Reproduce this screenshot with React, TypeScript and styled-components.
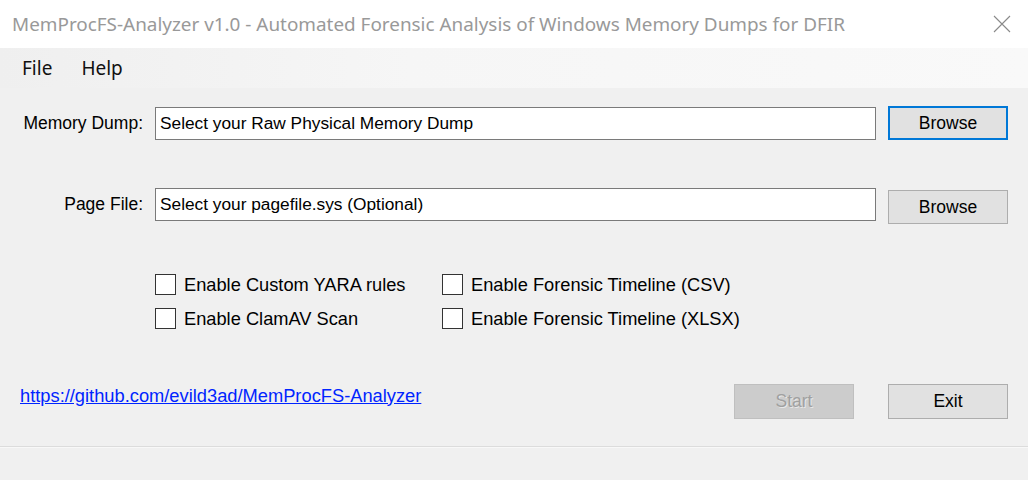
import * as React from 'react';
import styled, { createGlobalStyle } from 'styled-components';

const GlobalStyle = createGlobalStyle`
	html, body {
		margin: 0;
		padding: 0;
		background: #ffffff;
	}
	body {
		font-family: "Liberation Sans", Arial, sans-serif;
	}
`;

const Window = styled.div`
	width: 1028px;
	height: 485px;
	display: flex;
	flex-direction: column;
	background-color: #f0f0f0;
	overflow: hidden;
`;

const TitleBar = styled.div`
	height: 48px;
	flex-shrink: 0;
	background-color: #ffffff;
	display: flex;
	align-items: center;
	justify-content: space-between;
	padding: 0 17px 0 12px;
`;

const TitleText = styled.span`
	font-family: "Noto Sans", "Open Sans", sans-serif;
	font-size: 18.9px;
	color: #999999;
	white-space: nowrap;
`;

const CloseIcon = styled.svg`
	width: 18px;
	height: 18px;
	margin-bottom: 1px;
`;

const MenuBar = styled.div`
	height: 40px;
	flex-shrink: 0;
	display: flex;
	align-items: center;
	padding-left: 13px;
	background: linear-gradient(to right, #efefef 0%, #f6f6f6 40%, #f9f9f9 100%);
`;

const MenuItem = styled.span`
	font-family: "Noto Sans", "Open Sans", sans-serif;
	font-size: 19px;
	color: #111111;
	padding: 0 9px;
	margin-right: 11px;
`;

const Content = styled.div`
	flex: 1;
	display: flex;
	flex-direction: column;
	padding: 18px 20px 0 20px;
	font-size: 17.5px;
	color: #000000;
`;

const FileGrid = styled.div`
	display: grid;
	grid-template-columns: 123px 721px 120px;
	column-gap: 12px;
	row-gap: 48px;
	align-items: start;
`;

const FieldLabel = styled.label<{ $shift?: number }>`
	text-align: right;
	white-space: nowrap;
	line-height: 33px;
	margin-top: ${p => p.$shift || 0}px;
`;

const PathBox = styled.div<{ $shift?: number }>`
	height: 33px;
	box-sizing: border-box;
	background-color: #ffffff;
	border: 1.5px solid #7a7a7a;
	display: flex;
	align-items: center;
	padding-left: 4px;
	font-size: 17.3px;
	white-space: nowrap;
	margin-top: ${p => p.$shift || 0}px;
`;

const WinButton = styled.button<{ $focused?: boolean; $disabled?: boolean; $shift?: number }>`
	height: 34px;
	width: 120px;
	box-sizing: border-box;
	font-family: "Liberation Sans", Arial, sans-serif;
	font-size: 17.5px;
	padding: 0;
	background-color: ${p => (p.$disabled ? '#cccccc' : '#e1e1e1')};
	border: ${p => (p.$focused ? '2px solid #0078d7' : p.$disabled ? '1.5px solid #bfbfbf' : '1.5px solid #adadad')};
	color: ${p => (p.$disabled ? '#a0a0a0' : '#000000')};
	text-shadow: ${p => (p.$disabled ? '1px 1px 0 #e8e8e8' : 'none')};
	margin-top: ${p => p.$shift || 0}px;
`;

const ActionButton = styled(WinButton)`
	height: 35px;
`;

const OptionGrid = styled.div`
	display: grid;
	grid-template-columns: 287px auto;
	row-gap: 13px;
	margin: 50px 0 0 135px;
	font-size: 18.25px;
`;

const Option = styled.label`
	display: flex;
	align-items: center;
	height: 21px;
	gap: 8px;
	white-space: nowrap;
`;

const CheckBox = styled.span`
	width: 21px;
	height: 21px;
	box-sizing: border-box;
	background-color: #ffffff;
	border: 1.5px solid #333333;
	flex-shrink: 0;
`;

const ActionRow = styled.div`
	display: flex;
	align-items: center;
	margin-top: 55px;
	height: 35px;
`;

const RepoLink = styled.a`
	color: #0024ff;
	font-size: 18.3px;
	text-decoration: underline;
	margin-right: auto;
	margin-top: -12px;
`;

const ButtonGap = styled.div`
	width: 34px;
`;

const StatusStrip = styled.div`
	margin-top: 27px;
	height: 33px;
	border-top: 1px solid #dcdcdc;
	box-shadow: inset 0 1px 0 #f8f8f8;
	background-color: #f0f0f0;
`;

const BottomEdge = styled.div`
	height: 5px;
	background-color: #ffffff;
`;

const options = [
	'Enable Custom YARA rules',
	'Enable Forensic Timeline (CSV)',
	'Enable ClamAV Scan',
	'Enable Forensic Timeline (XLSX)',
];

export default function App() {
	return (
		<Window>
			<GlobalStyle />
			<TitleBar>
				<TitleText>MemProcFS-Analyzer v1.0 - Automated Forensic Analysis of Windows Memory Dumps for DFIR</TitleText>
				<CloseIcon viewBox="0 0 18 18">
					<path d="M1 1 L17 17 M17 1 L1 17" stroke="#8a8a8a" strokeWidth="1.1" fill="none" />
				</CloseIcon>
			</TitleBar>
			<MenuBar>
				<MenuItem>File</MenuItem>
				<MenuItem>Help</MenuItem>
			</MenuBar>
			<Content>
				<FileGrid>
					<FieldLabel $shift={1}>Memory Dump:</FieldLabel>
					<PathBox $shift={1}>Select your Raw Physical Memory Dump</PathBox>
					<WinButton $focused>Browse</WinButton>
					<FieldLabel>Page File:</FieldLabel>
					<PathBox>Select your pagefile.sys (Optional)</PathBox>
					<WinButton $shift={2}>Browse</WinButton>
				</FileGrid>
				<OptionGrid>
					{options.map(label => (
						<Option key={label}>
							<CheckBox />
							<span>{label}</span>
						</Option>
					))}
				</OptionGrid>
				<ActionRow>
					<RepoLink href="#">https://github.com/evild3ad/MemProcFS-Analyzer</RepoLink>
					<ActionButton $disabled>Start</ActionButton>
					<ButtonGap />
					<ActionButton>Exit</ActionButton>
				</ActionRow>
			</Content>
			<StatusStrip />
			<BottomEdge />
		</Window>
	);
}
